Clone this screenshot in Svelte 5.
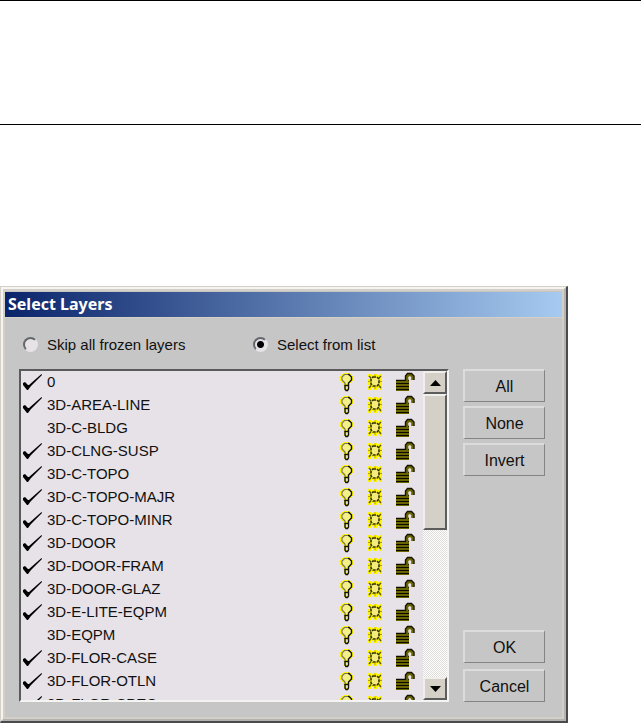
<script>
  let mode = $state('list');
  let layers = $state([
    { name: '0', on: true },
    { name: '3D-AREA-LINE', on: true },
    { name: '3D-C-BLDG', on: false },
    { name: '3D-CLNG-SUSP', on: true },
    { name: '3D-C-TOPO', on: true },
    { name: '3D-C-TOPO-MAJR', on: true },
    { name: '3D-C-TOPO-MINR', on: true },
    { name: '3D-DOOR', on: true },
    { name: '3D-DOOR-FRAM', on: true },
    { name: '3D-DOOR-GLAZ', on: true },
    { name: '3D-E-LITE-EQPM', on: true },
    { name: '3D-EQPM', on: false },
    { name: '3D-FLOR-CASE', on: true },
    { name: '3D-FLOR-OTLN', on: true },
    { name: '3D-FLOR-SPEC', on: true }
  ]);
  const setAll = (value) => layers.forEach((l) => (l.on = value));
  const invert = () => layers.forEach((l) => (l.on = !l.on));
</script>

<header></header>

<main>
  <section class="dialog" aria-labelledby="title">
    <div class="frame">
      <h1 id="title">Select Layers</h1>
      <div class="modes">
        <label><input type="radio" bind:group={mode} value="skip" />Skip all frozen layers</label>
        <label><input type="radio" bind:group={mode} value="list" />Select from list</label>
      </div>
      <div class="body">
        <div class="listbox">
          <ul>
            {#each layers as layer}
              <li>
                <label>
                  <input type="checkbox" bind:checked={layer.on} />
                  <svg class="tick" width="22" height="20" viewBox="0 0 22 20" aria-hidden="true">
                    {#if layer.on}
                      <path d="M2 11L4 10L7 13L8 13L20.5 2L21 3L10 14L7 18L6 18L2 13Z" fill="#000" />
                    {/if}
                  </svg>
                  {layer.name}
                </label>
                <svg width="16" height="20" viewBox="0 0 16 20" aria-hidden="true">
                  <path d="M4 1H11V2H13V4H14V9H13V11H11V14H10V18H9V19H6V18H5V14H4V11H2V9H1V4H2V2H4Z" fill="#fff500" />
                  <path d="M5 3H10L12 5V8L10 10V12H6V10L3 8V5Z" fill="#f4ef86" />
                  <path d="M6 14V11L3 8V5L5.5 2.5H9" fill="none" stroke="#77745d" stroke-width="1.2" />
                  <path d="M9 2.5H10L12.5 5V8L9.5 11V14M6 13V17L7 18.5H8.5L9.5 17V13.5H6" fill="none" stroke="#111" stroke-width="1.4" />
                  <path d="M7 14.5H8.5V17H7Z" fill="#ddd" />
                </svg>
                <svg width="16" height="18" viewBox="0 0 16 18" aria-hidden="true">
                  <path d="M1 1H4V2H6V1H10V2H12V1H15V4H14V6H15V12H14V13H15V17H12V15H10V17H6V15H4V17H1V13H2V12H1V6H2V4H1Z" fill="#fff500" />
                  <path d="M6 4H10L12 6V11L10 13H6L4 11V6Z" fill="#f3ec7c" stroke="#332f00" stroke-width="1.6" stroke-dasharray="3 1" />
                  <path d="M2 3L4 5M14 3L12 5M2 15L4 12.5M14 15L12 12.5" stroke="#5c5600" stroke-width="1.4" />
                  <path d="M1 8.5H3M13 8.5H15M8 1.5V3M8 14V16" stroke="#aaa200" />
                </svg>
                <svg width="20" height="20" viewBox="0 0 20 20" aria-hidden="true">
                  <path d="M1 8H14V19H1Z" fill="#8c8500" />
                  <path d="M1 8.5H14M1 11.5H14M1 14.5H14M1 17.5H14" stroke="#0b0a00" stroke-width="1.7" />
                  <path d="M12 9V4.5L13.5 3H16L17.5 4.5V8" fill="none" stroke="#6b6500" stroke-width="2.6" />
                  <path d="M10.5 9V4L12.5 1.5H16.5L19 4V8" fill="none" stroke="#171500" stroke-width="1.4" />
                </svg>
              </li>
            {/each}
          </ul>
          <div class="scroll">
            <button class="raised arrow" aria-label="Scroll up">
              <svg width="11" height="6" viewBox="0 0 11 6"><path d="M0 6L5.5 0L11 6Z" /></svg>
            </button>
            <div class="raised thumb"></div>
            <button class="raised arrow end" aria-label="Scroll down">
              <svg width="11" height="6" viewBox="0 0 11 6"><path d="M0 0L5.5 6L11 0Z" /></svg>
            </button>
          </div>
        </div>
        <div class="actions">
          <button onclick={() => setAll(true)}>All</button>
          <button onclick={() => setAll(false)}>None</button>
          <button onclick={invert}>Invert</button>
          <button class="ok">OK</button>
          <button>Cancel</button>
        </div>
      </div>
    </div>
  </section>
</main>

<style>
  :global(body) {
    margin: 0;
    background: #fff;
    color: #111;
    font: 15px/23px "Liberation Sans", Arial, sans-serif;
  }
  header {
    height: 123px;
    border: solid #000;
    border-width: 1px 0;
  }
  main {
    padding: 161px 73px 0 0;
  }
  .dialog {
    border: solid;
    border-width: 1px 2px 2px 1px;
    border-color: #d4d0c8 #4b4b4d #4b4b4d #d4d0c8;
  }
  .frame {
    border: 2px solid;
    border-color: #f6f4f0 #b4b3b0 #b4b3b0 #f6f4f0;
    padding: 3px 2px 2px;
    background: #c6c6c6;
    box-shadow: inset 0 0 0 2px #d4d0c8;
  }
  h1 {
    margin: 0;
    padding: 0 3px;
    border-bottom: 1px solid #d4d0c8;
    background: linear-gradient(90deg, #0a246a, #a6caf0);
    color: #fff;
    font: bold 16px/25px "Noto Sans", sans-serif;
  }
  .modes {
    display: grid;
    grid-template-columns: 230px 1fr;
    padding: 15px 17px 13px 18px;
  }
  .modes label {
    display: flex;
    align-items: center;
    gap: 9px;
  }
  .modes input {
    appearance: none;
    box-sizing: border-box;
    width: 15px;
    height: 15px;
    margin: 0;
    border: 2px solid;
    border-color: #63666a #e7e2e7 #e7e2e7 #63666a;
    border-radius: 50%;
    background: #e7e2e7;
  }
  .modes input:checked {
    background: radial-gradient(circle, #000 3px, #e7e2e7 4px);
  }
  .body {
    display: flex;
    gap: 14px;
    padding: 0 17px 15px 14px;
  }
  .listbox {
    flex: 1;
    display: flex;
    height: 329px;
    border: 2px solid;
    border-color: #5a5a5c #f4f4f2 #f4f4f2 #5a5a5c;
    background: #e7e2e7;
  }
  ul {
    flex: 1;
    margin: -1px 0 0;
    padding: 0;
    list-style: none;
    overflow: hidden;
  }
  li {
    display: flex;
    align-items: center;
    gap: 12px;
    height: 23px;
    padding-right: 8px;
  }
  li label {
    flex: 1;
    display: flex;
    align-items: center;
    gap: 4px;
  }
  li input {
    position: absolute;
    margin: 0;
    opacity: 0;
  }
  .scroll {
    width: 24px;
    display: flex;
    flex-direction: column;
    background: repeating-conic-gradient(#fff 0 25%, #deddd9 0 50%) 0 0 / 2px 2px;
  }
  .raised {
    box-sizing: border-box;
    border: 2px solid;
    border-color: #f0efec #5c5c5c #5c5c5c #f0efec;
    background: #d4d0c8;
  }
  .arrow {
    display: flex;
    align-items: center;
    justify-content: center;
    height: 23px;
    padding: 0;
  }
  .thumb {
    height: 136px;
  }
  .end {
    margin-top: auto;
  }
  .actions {
    width: 82px;
    display: flex;
    flex-direction: column;
    gap: 4px;
  }
  .actions button {
    height: 33px;
    padding: 0;
    border: solid;
    border-width: 2px 1px 1px 2px;
    border-color: #dcdcdc #848484 #848484 #dcdcdc;
    background: #c6c6c6;
    color: #111;
    font: inherit;
    font-size: 16px;
  }
  .actions .ok {
    margin: auto 0 2px;
  }
</style>
